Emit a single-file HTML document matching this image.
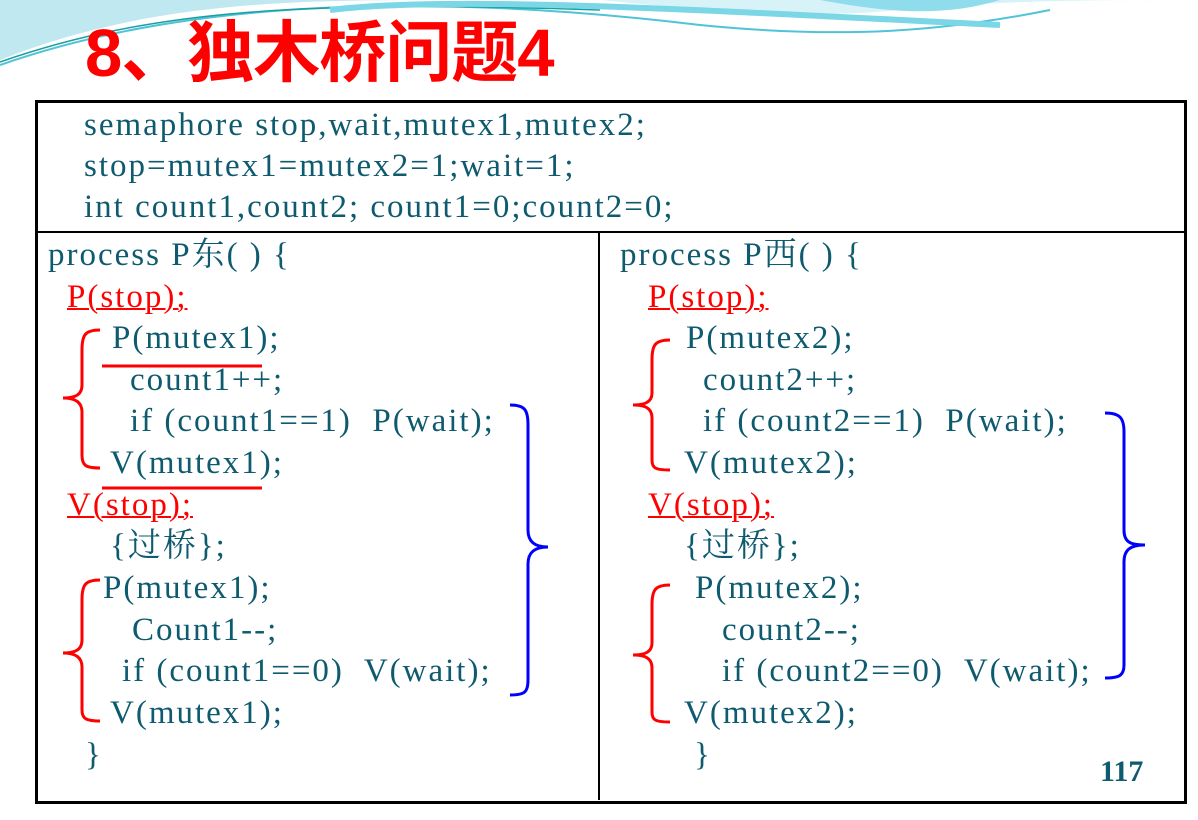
<!DOCTYPE html>
<html><head><meta charset="utf-8"><style>
body{margin:0;width:1198px;height:820px;background:#fff;position:relative;overflow:hidden;font-family:"Liberation Serif","Noto Serif CJK SC",serif;}
.t{position:absolute;font-size:33px;letter-spacing:2px;color:#0e5a6e;white-space:nowrap;line-height:40px;}
.r{color:#f00;text-decoration:underline;text-decoration-thickness:2px;}
#title{position:absolute;left:85px;top:14px;font-family:"Liberation Sans","Noto Sans CJK SC",sans-serif;font-weight:bold;font-size:67px;color:#f00;line-height:80px;letter-spacing:-1px}
#box{position:absolute;left:35px;top:100px;width:1146px;height:698px;border:3px solid #000;}
</style></head><body>
<svg style="position:absolute;left:0;top:0" width="1198" height="110">
<path d="M0 60 C150 0 300 0 450 0 L0 0Z" fill="#bfe8f0"/>
<path d="M0 65 C200 -5 450 -5 700 25 C850 40 950 30 1050 10" stroke="#4fc3d8" stroke-width="2" fill="none"/>
<path d="M0 62 C150 10 300 0 600 10" stroke="#1aa0a0" stroke-width="1.5" fill="none"/>
<path d="M600 0 C700 10 800 20 900 10 C1000 0 1100 0 1198 0Z" fill="#d8f3f8"/>
<path d="M820 0 C900 15 950 15 1000 0Z" fill="#8fdcec"/>
<path d="M330 10 C450 -5 700 10 1000 25" stroke="#7bd6e6" stroke-width="6" fill="none"/>
</svg>
<div id="title">8、独木桥问题4</div>
<div id="box"></div>
<div style="position:absolute;left:35px;top:231px;width:1149px;height:2px;background:#000"></div>
<div style="position:absolute;left:598px;top:232px;width:2px;height:568px;background:#000"></div>
<div class="t" style="left:84px;top:105px">semaphore stop,wait,mutex1,mutex2;</div>
<div class="t" style="left:84px;top:146px">stop=mutex1=mutex2=1;wait=1;</div>
<div class="t" style="left:84px;top:187px">int count1,count2; count1=0;count2=0;</div>

<div class="t" style="left:48px;top:235px">process P东( ) {</div>
<div class="t r" style="left:67px;top:277px">P(stop);</div>
<div class="t" style="left:112px;top:318px">P(mutex1);</div>
<div class="t" style="left:130px;top:360px">count1++;</div>
<div class="t" style="left:130px;top:401px">if (count1==1)&nbsp; P(wait);</div>
<div class="t" style="left:110px;top:443px">V(mutex1);</div>
<div class="t r" style="left:67px;top:485px">V(stop);</div>
<div class="t" style="left:110px;top:526px">{过桥};</div>
<div class="t" style="left:103px;top:568px">P(mutex1);</div>
<div class="t" style="left:132px;top:610px">Count1--;</div>
<div class="t" style="left:122px;top:651px">if (count1==0)&nbsp; V(wait);</div>
<div class="t" style="left:110px;top:693px">V(mutex1);</div>
<div class="t" style="left:85px;top:735px">}</div>

<div class="t" style="left:620px;top:235px">process P西( ) {</div>
<div class="t r" style="left:648px;top:277px">P(stop);</div>
<div class="t" style="left:686px;top:318px">P(mutex2);</div>
<div class="t" style="left:703px;top:360px">count2++;</div>
<div class="t" style="left:703px;top:401px">if (count2==1)&nbsp; P(wait);</div>
<div class="t" style="left:684px;top:443px">V(mutex2);</div>
<div class="t r" style="left:648px;top:485px">V(stop);</div>
<div class="t" style="left:684px;top:526px">{过桥};</div>
<div class="t" style="left:695px;top:568px">P(mutex2);</div>
<div class="t" style="left:722px;top:610px">count2--;</div>
<div class="t" style="left:722px;top:651px">if (count2==0)&nbsp; V(wait);</div>
<div class="t" style="left:684px;top:693px">V(mutex2);</div>
<div class="t" style="left:694px;top:735px">}</div>
<div class="t" style="left:1100px;top:752px;font-size:30px;letter-spacing:0;font-weight:bold">117</div>

<svg style="position:absolute;left:0;top:0" width="1198" height="820" fill="none" stroke-width="3">
<g stroke="#f00">
<line x1="102" y1="366" x2="262" y2="366"/>
<line x1="102" y1="488" x2="262" y2="488"/>
<path d="M100 330 C85 330 82 335 82 350 L82 385 C82 395 75 398 63 398 C75 398 82 402 82 412 L82 455 C82 465 85 468 100 468"/>
<path d="M100 580 C85 580 82 585 82 600 L82 640 C82 650 75 653 63 653 C75 653 82 657 82 667 L82 710 C82 718 85 721 100 721"/>
<path d="M670 340 C655 340 652 345 652 360 L652 393 C652 402 645 405 633 405 C645 405 652 408 652 418 L652 460 C652 468 655 470 670 470"/>
<path d="M670 585 C655 585 652 590 652 605 L652 643 C652 652 645 655 633 655 C645 655 652 658 652 668 L652 712 C652 720 655 722 670 722"/>
</g>
<g stroke="#00f">
<path d="M510 405 C525 405 528 410 528 425 L528 530 C528 542 535 547 548 547 C535 547 528 552 528 564 L528 680 C528 692 525 695 510 695"/>
<path d="M1105 413 C1120 413 1124 418 1124 432 L1124 530 C1124 542 1130 545 1145 545 C1130 545 1124 550 1124 562 L1124 665 C1124 675 1120 678 1105 678"/>
</g>
</svg>
</body></html>
